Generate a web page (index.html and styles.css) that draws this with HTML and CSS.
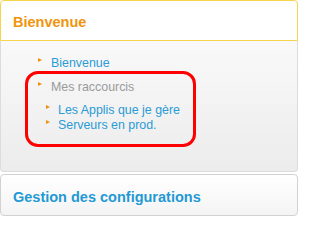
FILE: index.html
```html
<!DOCTYPE html>
<html lang="fr">
<head>
<meta charset="utf-8">
<title>Bienvenue</title>
<link rel="stylesheet" href="styles.css">
</head>
<body>
<section class="panel">
  <header class="panel-head"><h2 class="title title-orange">Bienvenue</h2></header>
  <div class="panel-body">
    <div class="menu">
      <div class="item"><span class="tri"></span><a class="link" href="#">Bienvenue</a></div>
      <div class="item item-group"><span class="tri"></span><span class="label">Mes raccourcis</span></div>
      <div class="sub">
        <div class="item sub-item"><span class="tri"></span><a class="link" href="#">Les Applis que je gère</a></div>
        <div class="item sub-item"><span class="tri"></span><a class="link" href="#">Serveurs en prod.</a></div>
      </div>
    </div>
    <div class="highlight"></div>
  </div>
</section>
<section class="panel2">
  <h2 class="title title-blue">Gestion des configurations</h2>
</section>
</body>
</html>
```
FILE: styles.css
```css
html, body {
  margin: 0;
  padding: 0;
  background: #ffffff;
}
body {
  width: 298px;
  font-family: "Liberation Sans", Arial, sans-serif;
}
.panel {
  position: relative;
  box-sizing: border-box;
  height: 172px;
}
.panel-head {
  box-sizing: border-box;
  height: 41px;
  border: 1px solid #f6d44e;
  border-radius: 4px 4px 0 0;
  background: #ffffff;
  padding: 0 0 0 12px;
  display: flex;
  align-items: flex-start;
}
.title {
  margin: 0;
  font-weight: bold;
  font-size: 14.5px;
  line-height: 17px;
}
.title-orange {
  color: #f0940c;
  padding-top: 13px;
}
.panel-body {
  position: relative;
  box-sizing: border-box;
  height: 131px;
  border: 1px solid #dcdcdc;
  border-top: none;
  border-radius: 0 0 4px 4px;
  background: linear-gradient(#f9f9f9, #ececec);
  padding: 14px 0 0 37px;
}
.menu {
  display: flex;
  flex-direction: column;
}
.item {
  display: flex;
  align-items: flex-start;
  font-size: 12.4px;
  line-height: 16px;
}
.item-group {
  margin-top: 7.5px;
}
.tri {
  width: 0;
  height: 0;
  border-left: 4px solid #ee9010;
  border-top: 2.5px solid transparent;
  border-bottom: 2.5px solid transparent;
  margin: 3px 9px 0 0;
  flex: none;
}
.link {
  color: #2b9bd6;
  text-decoration: none;
}
.label {
  color: #9a9a9a;
}
.sub {
  display: flex;
  flex-direction: column;
  padding: 8.5px 0 0 8px;
}
.sub-item {
  line-height: 14.5px;
}
.sub-item .tri {
  margin-top: 2px;
  margin-right: 8px;
}
.highlight {
  position: absolute;
  left: 24px;
  top: 30px;
  width: 171px;
  height: 76px;
  box-sizing: border-box;
  border: 3px solid #ff0000;
  border-radius: 13px;
  pointer-events: none;
}
.panel2 {
  box-sizing: border-box;
  margin-top: 2px;
  height: 42px;
  border: 1px solid #d2d2d2;
  border-radius: 4px;
  background: linear-gradient(#ffffff, #f4f4f4);
  padding: 14px 0 0 12px;
}
.title-blue {
  color: #2399d4;
}
```
